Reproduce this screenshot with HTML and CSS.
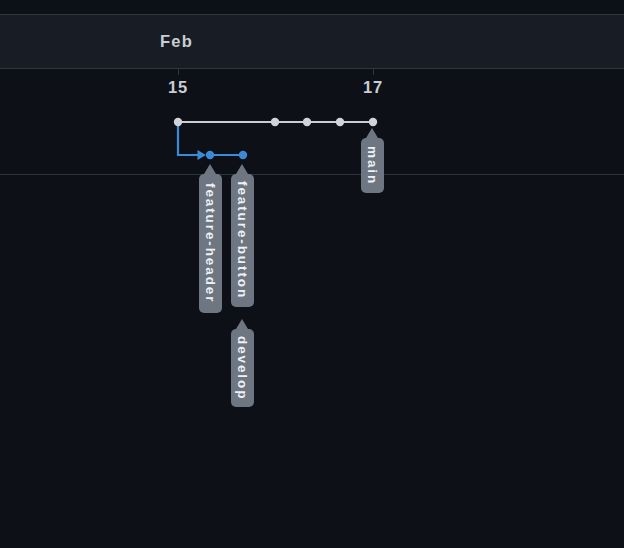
FILE: index.html
```html
<!DOCTYPE html>
<html>
<head>
<meta charset="utf-8">
<link rel="stylesheet" href="styles.css">
</head>
<body>
<div class="timeline">
  <div class="top-gap"></div>
  <div class="month-bar"><span class="month">Feb</span></div>
  <div class="day-row">
    <div class="day" style="left:178px"><span class="tick"></span><span class="day-label">15</span></div>
    <div class="day" style="left:373px"><span class="tick"></span><span class="day-label">17</span></div>
  </div>
  <svg class="graph" width="624" height="548" viewBox="0 0 624 548">
    <path d="M178 122 V155 H202" fill="none" stroke="#3a8ad6" stroke-width="2.2"/>
    <polygon points="197.5,150 206,155 197.5,160" fill="#3a8ad6"/>
    <line x1="210" y1="155" x2="243" y2="155" stroke="#3a8ad6" stroke-width="2.2"/>
    <circle cx="210" cy="155" r="4.2" fill="#3a8ad6"/>
    <circle cx="243" cy="155" r="4.2" fill="#3a8ad6"/>
    <line x1="178" y1="122" x2="373" y2="122" stroke="#c9ced4" stroke-width="2.2"/>
    <circle cx="178" cy="122" r="4.2" fill="#d0d4d9"/>
    <circle cx="275" cy="122" r="4.2" fill="#d0d4d9"/>
    <circle cx="307" cy="122" r="4.2" fill="#d0d4d9"/>
    <circle cx="340" cy="122" r="4.2" fill="#d0d4d9"/>
    <circle cx="373" cy="122" r="4.2" fill="#d0d4d9"/>
  </svg>
  <div class="tag" style="left:199px;top:174px;height:139px">feature-header</div>
  <div class="tag" style="left:231px;top:174px;height:133px">feature-button</div>
  <div class="tag" style="left:231px;top:329px;height:78px">develop</div>
  <div class="tag" style="left:361px;top:138px;height:55px">main</div>
</div>
</body>
</html>
```
FILE: styles.css
```css
html, body {
  margin: 0;
  padding: 0;
  background: #0d1117;
}
body {
  width: 624px;
  height: 548px;
  overflow: hidden;
  font-family: "Liberation Sans", Arial, sans-serif;
}
.timeline {
  position: relative;
  width: 624px;
  height: 548px;
}
.top-gap {
  height: 14px;
}
.month-bar {
  height: 53px;
  border-top: 1px solid #30363d;
  border-bottom: 1px solid #30363d;
  background: #181c24;
  display: flex;
  align-items: center;
  padding-left: 160px;
}
.month {
  font-size: 16.5px;
  font-weight: bold;
  letter-spacing: 1.2px;
  color: #c9ced4;
}
.day-row {
  position: relative;
  height: 105px;
  border-bottom: 1px solid #2d323a;
}
.day {
  position: absolute;
  top: 0;
  width: 0;
}
.tick {
  position: absolute;
  left: -0.5px;
  top: 0;
  width: 1px;
  height: 6px;
  background: #30363d;
}
.day-label {
  position: absolute;
  top: 10px;
  left: -20px;
  width: 40px;
  text-align: center;
  font-size: 16.5px;
  line-height: 16px;
  font-weight: bold;
  letter-spacing: 0.8px;
  color: #c9ced4;
}
.graph {
  position: absolute;
  left: 0;
  top: 0;
}
.tag {
  position: absolute;
  width: 23px;
  box-sizing: border-box;
  background: #6e7681;
  border-radius: 5px;
  color: #eef1f4;
  font-size: 13.5px;
  font-weight: bold;
  letter-spacing: 1.9px;
  line-height: 23px;
  writing-mode: vertical-rl;
  text-align: center;
  white-space: nowrap;
}
.tag::before {
  content: "";
  position: absolute;
  top: -10px;
  left: 5px;
  width: 0;
  height: 0;
  border-left: 6.5px solid transparent;
  border-right: 6.5px solid transparent;
  border-bottom: 10px solid #6e7681;
}
```
